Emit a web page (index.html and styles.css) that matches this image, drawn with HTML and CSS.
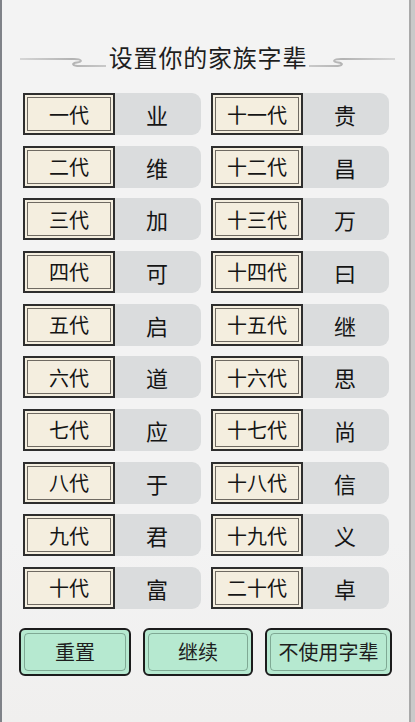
FILE: index.html
```html
<!DOCTYPE html>
<html lang="zh">
<head>
<meta charset="utf-8">
<title>设置你的家族字辈</title>
<link rel="stylesheet" href="styles.css">
</head>
<body>
<div class="panel">
  <div class="title-row">
    <svg class="deco" width="86" height="28" viewBox="0 0 86 28">
      <defs>
        <linearGradient id="fadeL" x1="0" x2="1" y1="0" y2="0">
          <stop offset="0" stop-color="#d6d6d6"/>
          <stop offset="0.6" stop-color="#b3b3b3"/>
          <stop offset="1" stop-color="#c9c9c9"/>
        </linearGradient>
      </defs>
      <path d="M0 16 H54 C62 16 63 19 57 19.5 C51 20 52 23 60 23 H86" fill="none" stroke="url(#fadeL)" stroke-width="2" stroke-linecap="round"/>
    </svg>
    <h1 class="title">设置你的家族字辈</h1>
    <svg class="deco flip" width="86" height="28" viewBox="0 0 86 28">
      <defs>
        <linearGradient id="fadeR" x1="0" x2="1" y1="0" y2="0">
          <stop offset="0" stop-color="#d6d6d6"/>
          <stop offset="0.6" stop-color="#b3b3b3"/>
          <stop offset="1" stop-color="#c9c9c9"/>
        </linearGradient>
      </defs>
      <path d="M0 16 H54 C62 16 63 19 57 19.5 C51 20 52 23 60 23 H86" fill="none" stroke="url(#fadeR)" stroke-width="2" stroke-linecap="round"/>
    </svg>
  </div>

  <div class="grid">
    <div class="item"><div class="label">一代</div><div class="value">业</div></div>
    <div class="item"><div class="label">十一代</div><div class="value">贵</div></div>
    <div class="item"><div class="label">二代</div><div class="value">维</div></div>
    <div class="item"><div class="label">十二代</div><div class="value">昌</div></div>
    <div class="item"><div class="label">三代</div><div class="value">加</div></div>
    <div class="item"><div class="label">十三代</div><div class="value">万</div></div>
    <div class="item"><div class="label">四代</div><div class="value">可</div></div>
    <div class="item"><div class="label">十四代</div><div class="value">曰</div></div>
    <div class="item"><div class="label">五代</div><div class="value">启</div></div>
    <div class="item"><div class="label">十五代</div><div class="value">继</div></div>
    <div class="item"><div class="label">六代</div><div class="value">道</div></div>
    <div class="item"><div class="label">十六代</div><div class="value">思</div></div>
    <div class="item"><div class="label">七代</div><div class="value">应</div></div>
    <div class="item"><div class="label">十七代</div><div class="value">尚</div></div>
    <div class="item"><div class="label">八代</div><div class="value">于</div></div>
    <div class="item"><div class="label">十八代</div><div class="value">信</div></div>
    <div class="item"><div class="label">九代</div><div class="value">君</div></div>
    <div class="item"><div class="label">十九代</div><div class="value">义</div></div>
    <div class="item"><div class="label">十代</div><div class="value">富</div></div>
    <div class="item"><div class="label">二十代</div><div class="value">卓</div></div>
  </div>

  <div class="buttons">
    <div class="btn">重置</div>
    <div class="btn">继续</div>
    <div class="btn">不使用字辈</div>
  </div>
</div>
</body>
</html>
```

FILE: styles.css
```css
html, body {
  margin: 0;
  padding: 0;
}
body {
  width: 415px;
  height: 722px;
  overflow: hidden;
  background: #c9c9c9;
  font-family: "Noto Sans CJK SC", "Noto Sans", sans-serif;
  color: #1a1a1a;
}
.panel {
  box-sizing: border-box;
  width: 411px;
  height: 722px;
  border-left: 2px solid #7f8288;
  border-right: 2px solid #a9a9a9;
  background: linear-gradient(180deg, #f3f3f3 0%, #f3f3f3 75%, #f0efee 100%);
  padding-top: 43px;
}
.title-row {
  display: flex;
  justify-content: flex-start;
  align-items: flex-start;
  height: 28px;
  padding-left: 18px;
}
.deco {
  display: block;
  flex: none;
}
.flip {
  transform: scaleX(-1);
}
.title {
  margin: 0;
  width: 202px;
  text-align: center;
  font-size: 24px;
  font-weight: 400;
  line-height: 28px;
  letter-spacing: 0.8px;
  color: #1e1e1e;
  padding-left: 1px;
}
.grid {
  display: grid;
  grid-template-columns: 178px 178px;
  column-gap: 10px;
  row-gap: 10.67px;
  margin-top: 22px;
  padding-left: 21px;
}
.item {
  display: flex;
  height: 42px;
  background: #dadcdd;
  border-radius: 8px 9px 9px 8px;
}
.label {
  box-sizing: border-box;
  width: 92px;
  height: 42px;
  background: #f4eedf;
  border: 2px solid #2e2e2e;
  border-bottom-width: 2.5px;
  box-shadow: inset 0 0 0 2px #f4eedf, inset 0 0 0 3px #6f6a62;
  display: flex;
  align-items: center;
  justify-content: center;
  font-size: 20px;
  color: #151515;
}
.value {
  flex: 1;
  display: flex;
  align-items: center;
  justify-content: center;
  font-size: 22px;
  color: #151515;
  padding-right: 2px;
}
.buttons {
  display: grid;
  grid-template-columns: 112px 110px 127px;
  column-gap: 12px;
  margin-top: 19px;
  padding-left: 17px;
}
.btn {
  position: relative;
  box-sizing: border-box;
  height: 48px;
  background: #b6e9d0;
  border: 2.5px solid #1c1c1c;
  border-radius: 6px;
  display: flex;
  align-items: center;
  justify-content: center;
  font-size: 20px;
  color: #1e1e1e;
  white-space: nowrap;
}
.btn::before {
  content: "";
  position: absolute;
  left: 3px;
  right: 3px;
  top: 3px;
  bottom: 3px;
  border: 1px solid rgba(60, 90, 75, 0.45);
  border-radius: 4px;
  pointer-events: none;
}
```
